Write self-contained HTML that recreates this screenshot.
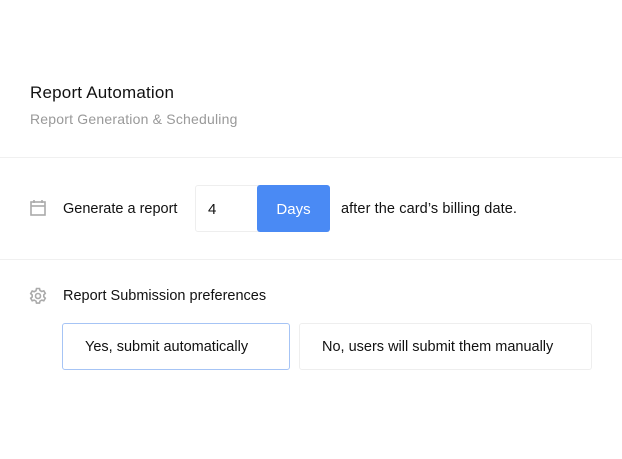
<!DOCTYPE html>
<html><head><style>
body{margin:0;width:622px;height:459px;background:#fff;font-family:"Liberation Sans",sans-serif;position:relative;overflow:hidden;color:#111}
.a{position:absolute;white-space:nowrap}
.line{position:absolute;left:0;width:622px;height:1px;background:#f0f0f0}
</style></head><body>
<div class="a" style="left:30px;top:83px;font-size:17px;letter-spacing:0.2px">Report Automation</div>
<div class="a" style="left:30px;top:111px;font-size:14px;color:#999;letter-spacing:0.2px">Report Generation &amp; Scheduling</div>
<div class="line" style="top:157px"></div>
<svg class="a" style="left:29px;top:199px" width="18" height="18" viewBox="0 0 18 18" fill="none" stroke="#aaa" stroke-width="1.6"><rect x="2" y="3" width="14" height="13"/><line x1="2" y1="7" x2="16" y2="7"/><line x1="5" y1="1" x2="5" y2="4"/><line x1="13" y1="1" x2="13" y2="4"/></svg>
<div class="a" style="left:63px;top:201px;font-size:14.5px">Generate a report</div>
<div class="a" style="left:195px;top:185px;width:64px;height:45px;border:1px solid #eee;border-radius:3px"></div>
<div class="a" style="left:208px;top:201px;font-size:15px">4</div>
<div class="a" style="left:257px;top:185px;width:73px;height:47px;background:#4a8af4;border-radius:3px;color:#fff;font-size:15px;text-align:center;line-height:49px">Days</div>
<div class="a" style="left:341px;top:201px;font-size:14.5px;letter-spacing:0.1px">after the card’s billing date.</div>
<div class="line" style="top:259px"></div>
<svg class="a" style="left:29px;top:287px" width="18" height="18" viewBox="0 0 18 18" fill="none" stroke="#aaa" stroke-width="1.6"><circle cx="9" cy="9" r="2.5"/><path d="M7.5 1.5h3l.5 2 1.8 1 2-.7 1.5 2.6-1.5 1.4v2l1.5 1.4-1.5 2.6-2-.7-1.8 1-.5 2h-3l-.5-2-1.8-1-2 .7-1.5-2.6L3.2 10V8L1.7 6.6l1.5-2.6 2 .7 1.8-1z"/></svg>
<div class="a" style="left:63px;top:288px;font-size:14.5px">Report Submission preferences</div>
<div class="a" style="left:62px;top:323px;width:226px;height:45px;border:1px solid #a6c4f5;border-radius:3px;font-size:14.5px;line-height:47px;text-indent:22px">Yes, submit automatically</div>
<div class="a" style="left:299px;top:323px;width:291px;height:45px;border:1px solid #eee;border-radius:3px;font-size:14.5px;line-height:47px;text-indent:22px">No, users will submit them manually</div>
</body></html>
